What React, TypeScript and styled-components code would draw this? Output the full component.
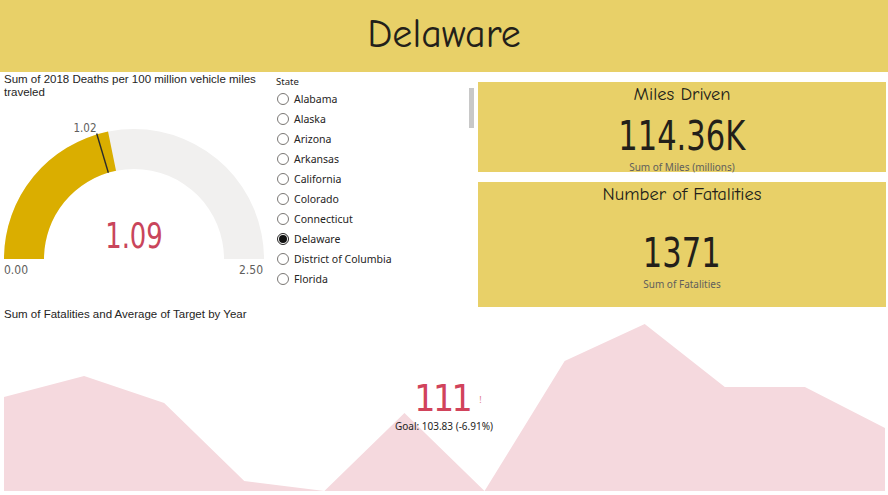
import React, { FC } from 'react';
import styled, { createGlobalStyle } from 'styled-components';

const YELLOW = '#E8D068';
const GOLD = '#DAAE00';
const RED = '#C9455B';
const TEXT = '#252423';
const MUTED = '#605E5C';

const DIN = '"Liberation Sans Narrow", "DejaVu Sans Condensed", "Liberation Sans", sans-serif';
const UI = '"Segoe UI", "Noto Sans", "Open Sans", sans-serif';
const TITLE = '"Liberation Sans", Arial, sans-serif';
const COMIC = '"Comic Sans MS", "Comic Neue", "DejaVu Sans", sans-serif';

const states = [
    'Alabama',
    'Alaska',
    'Arizona',
    'Arkansas',
    'California',
    'Colorado',
    'Connecticut',
    'Delaware',
    'District of Columbia',
    'Florida',
];

const fatalities = [397, 376, 403, 481, 491, 413, 491, 361, 324, 387, 387, 428];

const GlobalStyle = createGlobalStyle`
    html, body {
        margin: 0;
        padding: 0;
        background: #fff;
    }
    * {
        box-sizing: border-box;
    }
`

const Page = styled.div`
    width: 888px;
    height: 495px;
    overflow: hidden;
    display: flex;
    flex-direction: column;
    background: #fff;
    color: ${TEXT};
    font-family: ${UI};
`

const Header = styled.header`
    height: 72px;
    flex-shrink: 0;
    background: ${YELLOW};
    display: flex;
    align-items: center;
    justify-content: center;
    font-family: ${COMIC};
    font-size: 40px;
    color: #231f1a;
    padding-bottom: 4px;
`

const Middle = styled.section`
    display: grid;
    grid-template-columns: 270px 208px 408px;
    height: 236px;
    flex-shrink: 0;
`

const GaugePanel = styled.div`
    padding: 1px 0 0 4px;
    display: flex;
    flex-direction: column;
`

const VisualTitle = styled.div`
    font-family: ${TITLE};
    font-size: 11.5px;
    line-height: 13px;
    color: ${TEXT};
    width: 264px;
`

const Slicer = styled.div`
    display: flex;
    flex-direction: column;
    padding: 3px 4px 0 6px;
`

const SlicerHeader = styled.div`
    font-family: ${UI};
    font-size: 9.5px;
    line-height: 14px;
    color: ${TEXT};
`

const SlicerBody = styled.div`
    display: flex;
    height: 206px;
`

const SlicerList = styled.ul`
    flex: 1;
    list-style: none;
    margin: 0;
    padding: 0;
    overflow: hidden;
`

const SlicerItem = styled.li`
    height: 20px;
    display: flex;
    align-items: center;
    gap: 5px;
    font-size: 10.5px;
    color: ${TEXT};
`

const Radio = styled.span<{ $checked: boolean }>`
    width: 12px;
    height: 12px;
    margin-left: 1px;
    border-radius: 50%;
    border: 1px solid ${({ $checked }) => $checked ? '#252423' : '#7a7774'};
    display: flex;
    align-items: center;
    justify-content: center;
    flex-shrink: 0;

    &::after {
        content: '';
        width: 8px;
        height: 8px;
        border-radius: 50%;
        background: ${({ $checked }) => $checked ? '#111' : 'transparent'};
    }
`

const ScrollTrack = styled.div`
    width: 5px;
    margin-top: -1px;
`

const ScrollThumb = styled.div`
    height: 40px;
    background: #c8c8c8;
`

const CardColumn = styled.div`
    display: flex;
    flex-direction: column;
    gap: 10px;
    padding-top: 10px;
`

const Card = styled.div<{ $height: number }>`
    height: ${({ $height }) => $height}px;
    background: ${YELLOW};
    display: flex;
    flex-direction: column;
    align-items: center;
`

const CardTitle = styled.div`
    font-family: ${COMIC};
    font-size: 18.5px;
    line-height: 24px;
    color: #231f1a;
`

const CardValue = styled.div<{ $gap: number }>`
    margin-top: ${({ $gap }) => $gap}px;
    font-family: ${DIN};
    font-size: 40px;
    line-height: 40px;
    color: #231f1a;
    transform: scaleX(0.85);
`

const CardLabel = styled.div`
    margin-top: 5px;
    font-family: ${UI};
    font-size: 10px;
    line-height: 12px;
    color: ${MUTED};
`

const Bottom = styled.section`
    position: relative;
    flex: 1;
    display: flex;
    flex-direction: column;
`

const BottomTitle = styled(VisualTitle)`
    padding-left: 4px;
    width: auto;
`

const Kpi = styled.div`
    position: absolute;
    top: 72px;
    left: 0;
    right: 0;
    display: flex;
    flex-direction: column;
    align-items: center;
`

const KpiRow = styled.div`
    display: flex;
    align-items: center;
    padding-left: 8px;
`

const KpiValue = styled.span`
    font-family: ${DIN};
    font-size: 37px;
    line-height: 38px;
    letter-spacing: -2.5px;
    color: #D1435B;
`

const KpiFlag = styled.span`
    margin-left: 9px;
    font-family: ${UI};
    font-size: 9px;
    color: #E07C8C;
`

const KpiGoal = styled.div`
    margin-top: 2px;
    font-family: ${UI};
    font-size: 10px;
    line-height: 12px;
    color: ${TEXT};
`

const Gauge: FC<{ value: number; target: number; max: number }> = ({ value, target, max }) => {
    const cx = 130;
    const cy = 160;
    const R = 130;
    const r = 90;

    const pt = (f: number, rad: number) => {
        const a = Math.PI * (1 - f);
        return [cx + rad * Math.cos(a), cy - rad * Math.sin(a)];
    }

    const band = (f0: number, f1: number) => {
        const [ox0, oy0] = pt(f0, R);
        const [ox1, oy1] = pt(f1, R);
        const [ix1, iy1] = pt(f1, r);
        const [ix0, iy0] = pt(f0, r);
        return `M${ox0} ${oy0} A${R} ${R} 0 0 1 ${ox1} ${oy1} L${ix1} ${iy1} A${r} ${r} 0 0 0 ${ix0} ${iy0} Z`;
    }

    const tf = target / max;
    const [tx0, ty0] = pt(tf, r);
    const [tx1, ty1] = pt(tf, R + 1);

    return (
        <svg width="266" height="182" viewBox="0 0 266 182">
            <path d={band(0, 1)} fill="#F1F0EF" />
            <path d={band(0, value / max)} fill={GOLD} />
            <line x1={tx0} y1={ty0} x2={tx1} y2={ty1} stroke="#2b2b2b" strokeWidth="1.4" />
            <text x="81" y="33" fontFamily={DIN} fontSize="11.5" fill={MUTED} textAnchor="middle">{target.toFixed(2)}</text>
            <text transform="translate(130 149) scale(0.8 1)" fontFamily='"DejaVu Sans Condensed", "DejaVu Sans", sans-serif' fontWeight="200" fontSize="36" fill={RED} textAnchor="middle">{value.toFixed(2)}</text>
            <text x="0" y="175" fontFamily={DIN} fontSize="12" fill={MUTED}>0.00</text>
            <text x="259" y="175" fontFamily={DIN} fontSize="12" fill={MUTED} textAnchor="end">{max.toFixed(2)}</text>
        </svg>
    )
}

const AreaChart: FC<{ data: number[] }> = ({ data }) => {
    const top = 321;
    const base = 491 - top;
    const step = (885 - 4) / (data.length - 1);
    const points = data.map((y, i) => `${4 + i * step},${y - top}`).join(' ');

    return (
        <svg width="888" height="174" viewBox="0 0 888 174">
            <polygon points={`4,${base} ${points} 885,${base}`} fill="#F5D9DE" />
        </svg>
    )
}

const App: FC = () => {
    return (
        <>
            <GlobalStyle />
            <Page>
                <Header>Delaware</Header>
                <Middle>
                    <GaugePanel>
                        <VisualTitle>Sum of 2018 Deaths per 100 million vehicle miles traveled</VisualTitle>
                        <Gauge value={1.09} target={1.02} max={2.5} />
                    </GaugePanel>
                    <Slicer>
                        <SlicerHeader>State</SlicerHeader>
                        <SlicerBody>
                            <SlicerList>
                                {states.map(state => (
                                    <SlicerItem key={state}>
                                        <Radio $checked={state === 'Delaware'} />
                                        {state}
                                    </SlicerItem>
                                ))}
                            </SlicerList>
                            <ScrollTrack>
                                <ScrollThumb />
                            </ScrollTrack>
                        </SlicerBody>
                    </Slicer>
                    <CardColumn>
                        <Card $height={90}>
                            <CardTitle>Miles Driven</CardTitle>
                            <CardValue $gap={10}>114.36K</CardValue>
                            <CardLabel>Sum of Miles (millions)</CardLabel>
                        </Card>
                        <Card $height={125}>
                            <CardTitle>Number of Fatalities</CardTitle>
                            <CardValue $gap={27}>1371</CardValue>
                            <CardLabel>Sum of Fatalities</CardLabel>
                        </Card>
                    </CardColumn>
                </Middle>
                <Bottom>
                    <BottomTitle>Sum of Fatalities and Average of Target by Year</BottomTitle>
                    <AreaChart data={fatalities} />
                    <Kpi>
                        <KpiRow>
                            <KpiValue>111</KpiValue>
                            <KpiFlag>!</KpiFlag>
                        </KpiRow>
                        <KpiGoal>Goal: 103.83 (-6.91%)</KpiGoal>
                    </Kpi>
                </Bottom>
            </Page>
        </>
    )
}

export default App;
